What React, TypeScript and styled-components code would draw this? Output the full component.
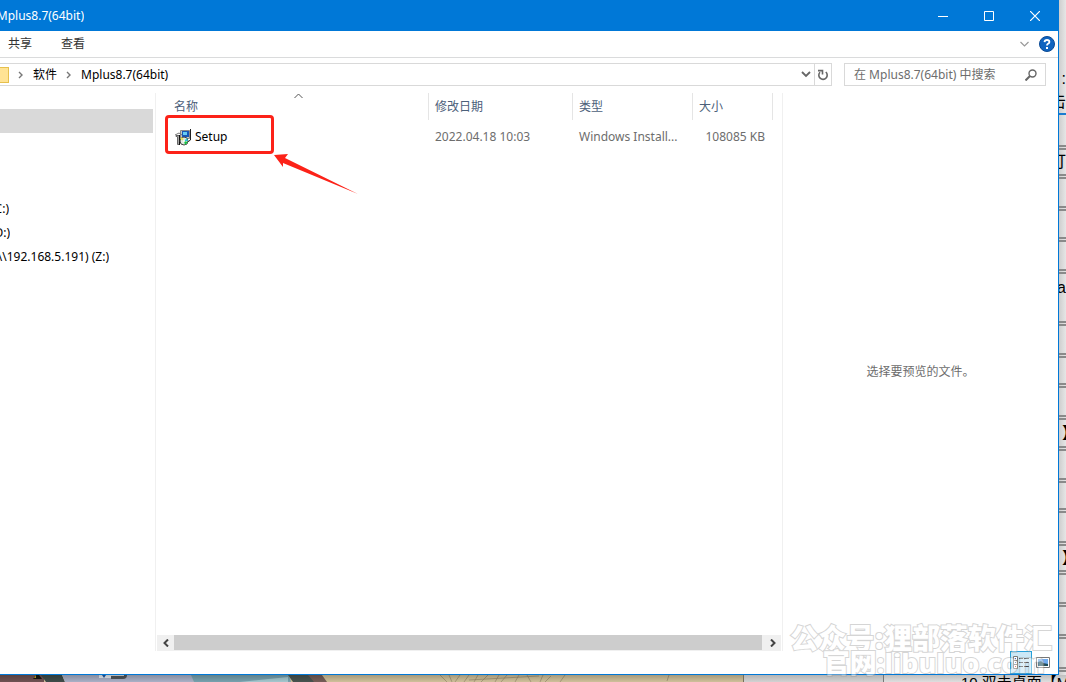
import React from "react";
import styled, { createGlobalStyle } from "styled-components";

const GlobalStyle = createGlobalStyle`
  * { box-sizing: border-box; }
  body {
    margin: 0;
    font-family: "Noto Sans", "Noto Sans CJK SC", sans-serif;
    font-size: 12px;
    line-height: 16px;
    color: #000;
  }
  button, input { font: inherit; color: inherit; }
  button { border: 0; padding: 0; background: none; }
`;

const Desktop = styled.div`
  display: grid;
  grid-template-columns: minmax(0, 1fr) 7px;
  grid-template-rows: minmax(0, 1fr) 7px;
  height: 100vh;
  overflow: hidden;
  background: #dedede;
`;

const Window = styled.main`
  position: relative;
  display: flex;
  flex-direction: column;
  min-width: 0;
  background: #fff;
  border-right: 1px solid #0078d7;
  border-bottom: 1px solid #0078d7;
`;

const TitleBar = styled.header`
  display: flex;
  justify-content: space-between;
  height: 31px;
  flex: none;
  background: #0078d7;
  color: #fff;
`;

const Title = styled.h1`
  display: flex;
  align-items: center;
  justify-content: flex-end;
  width: 84px;
  margin: 0;
  overflow: hidden;
  font-size: 12px;
  font-weight: 400;
`;

const CaptionButtons = styled.div`
  display: flex;
`;

const CaptionButton = styled.button`
  display: grid;
  place-items: center;
  width: 46px;
`;

const Ribbon = styled.nav`
  display: flex;
  align-items: center;
  height: 27px;
  flex: none;
  padding: 0 3px 0 8px;
  border-bottom: 1px solid #dadbdc;
`;

const RibbonTab = styled.button`
  margin-right: 29px;
  color: #333;
`;

const RibbonTools = styled.div`
  display: flex;
  align-items: center;
  gap: 10px;
  margin-left: auto;
`;

const IconButton = styled.button`
  display: grid;
  place-items: center;
`;

const AddressRow = styled.div`
  display: flex;
  gap: 12px;
  flex: none;
  padding: 5px 12px 7px 0;
`;

const AddressBar = styled.div`
  display: flex;
  flex: 1;
  height: 23px;
  border: 1px solid #d9d9d9;
  border-left: 0;
`;

const Crumbs = styled.div`
  display: flex;
  align-items: center;
  flex: 1;
`;

const FolderTile = styled.span`
  width: 9px;
  height: 16px;
  background: #ffe394;
  border: 1px solid #e6c04d;
  border-left: 0;
`;

const Crumb = styled.button`
  white-space: nowrap;
`;

const CrumbArrow = styled.svg`
  margin: 0 10px 0 9px;
`;

const HistoryButton = styled(IconButton)`
  width: 17px;
`;

const RefreshButton = styled(IconButton)`
  width: 17px;
  border-left: 1px solid #d9d9d9;
`;

const SearchBox = styled.label`
  display: flex;
  align-items: center;
  width: 202px;
  height: 23px;
  padding: 0 8px 0 9px;
  border: 1px solid #d9d9d9;
`;

const SearchInput = styled.input`
  flex: 1;
  min-width: 0;
  padding: 0;
  border: 0;
  outline: 0;
  background: none;
  &::placeholder { color: #6d6d6d; opacity: 1; }
`;

const Body = styled.div`
  display: flex;
  flex: 1;
  min-height: 0;
`;

const NavPane = styled.nav`
  display: flex;
  flex-direction: column;
  gap: 64px;
  width: 156px;
  flex: none;
  padding: 16px 2px 0 0;
  border-right: 1px solid #f0f0f0;
`;

const NavItem = styled.button<{ $end?: number; $selected?: boolean }>`
  display: flex;
  align-items: center;
  justify-content: flex-end;
  width: ${(p) => (p.$end ? p.$end + "px" : "100%")};
  height: 24px;
  overflow: hidden;
  white-space: nowrap;
  background: ${(p) => (p.$selected ? "#d9d9d9" : "transparent")};
`;

const ListPane = styled.section`
  position: relative;
  display: flex;
  flex: 1;
  flex-direction: column;
  min-width: 0;
  padding: 0 1px;
  border-right: 1px solid #f0f0f0;
`;

const FileTable = styled.table`
  width: calc(100% - 19px);
  margin-left: 11px;
  table-layout: fixed;
  border-collapse: separate;
  border-spacing: 0;
`;

const HeadCell = styled.th<{ $width?: number }>`
  position: relative;
  width: ${(p) => (p.$width ? p.$width + "px" : "auto")};
  height: 27px;
  padding: 0 6px;
  border-right: 1px solid #e5e5e5;
  color: #4c607a;
  font-weight: 400;
  text-align: left;
`;

const SortMark = styled.svg`
  position: absolute;
  top: 0;
  left: 50%;
  margin-left: -4px;
`;

const Cell = styled.td<{ $align?: string; $color?: string }>`
  height: 34px;
  padding: 0 8px 0 6px;
  overflow: hidden;
  color: ${(p) => p.$color || "#6d6d6d"};
  text-align: ${(p) => p.$align || "left"};
  text-overflow: ellipsis;
  white-space: nowrap;
`;

const FileName = styled.span`
  display: flex;
  align-items: center;
  gap: 4px;
  padding-left: 1px;
`;

const Highlight = styled.div`
  position: absolute;
  top: 22px;
  left: 9px;
  width: 109px;
  height: 39px;
  border: 3px solid #fc2218;
  border-radius: 4px;
`;

const Arrow = styled.svg`
  position: absolute;
  top: 60px;
  left: 117px;
`;

const ScrollBar = styled.div`
  display: flex;
  height: 16px;
  margin-top: auto;
  background: #f0f0f0;
`;

const ScrollButton = styled(IconButton)`
  width: 17px;
`;

const ScrollThumb = styled.div`
  flex: 1;
  height: 15px;
  margin-right: 2px;
  background: #cdcdcd;
`;

const Preview = styled.aside`
  display: grid;
  place-items: center;
  width: 275px;
  flex: none;
  color: #6d6d6d;
`;

const StatusBar = styled.footer`
  display: flex;
  justify-content: flex-end;
  height: 23px;
  flex: none;
  padding-right: 4px;
`;

const ViewButton = styled(IconButton)<{ $active?: boolean }>`
  width: 22px;
  height: 23px;
  border: 1px solid ${(p) => (p.$active ? "#26a0da" : "transparent")};
  background: ${(p) => (p.$active ? "#cbe8f6" : "transparent")};
`;

const Watermark = styled.div`
  position: absolute;
  right: 6px;
  bottom: 0;
  font-family: "Noto Sans CJK SC", sans-serif;
  font-size: 28px;
  font-weight: 900;
  line-height: 27px;
  color: #fff;
  text-align: right;
  white-space: nowrap;
  pointer-events: none;
  opacity: 0.4;
  paint-order: stroke fill;
  -webkit-text-stroke: 2px #999;
`;

const WatermarkSite = styled.div`
  padding-right: 7px;
  font-family: "Noto Sans", "Noto Sans CJK SC", sans-serif;
  font-size: 27px;
  font-weight: 800;
  line-height: 23px;
`;

const SideDocument = styled.div`
  height: 100%;
  overflow: hidden;
  background: linear-gradient(90deg, #cecece, #e6e6e6);
`;

const SideRow = styled.div<{ $height: number; $kind?: string; $mark?: boolean }>`
  display: flex;
  align-items: center;
  justify-content: ${(p) => (p.$mark ? "flex-start" : "flex-end")};
  height: ${(p) => p.$height}px;
  padding-left: ${(p) => (p.$mark ? 3 : 0)}px;
  overflow: hidden;
  font-family: "Liberation Sans", "Noto Sans CJK SC", sans-serif;
  font-size: 16px;
  font-weight: ${(p) => (p.$mark ? 700 : 400)};
  border-bottom: ${(p) =>
    p.$kind === "blue" ? "2px solid #1c7cd0" : p.$kind === "plain" ? "0" : "5px double #8a8a8a"};
`;

const Strip = styled.div`
  display: flex;
  grid-column: 1 / -1;
  overflow: hidden;
`;

const Wallpaper = styled.svg`
  width: 743px;
  flex: none;
`;

const StripPage = styled.div`
  width: 141px;
  flex: none;
  background: linear-gradient(#b4b4b4, #d2d2d2);
  border-left: 1px solid #77705c;
  border-right: 1px solid #777;
`;

const StripText = styled.div`
  flex: 1;
  padding-left: 77px;
  overflow: hidden;
  background: linear-gradient(#bfbfbf, #dedede);
  font-family: "Liberation Sans", "Noto Sans CJK SC", sans-serif;
  font-size: 15px;
  line-height: 16px;
  white-space: nowrap;
`;

const sideRows: { height: number; kind?: string; text?: string; mark?: boolean }[] = [
  { height: 68, kind: "plain" },
  { height: 22, kind: "plain", text: ":" },
  { height: 25, kind: "blue", text: "击" },
  { height: 35 },
  { height: 29, text: "打" },
  { height: 32 },
  { height: 31 },
  { height: 32 },
  { height: 28, kind: "plain", text: "a" },
  { height: 24 },
  { height: 32 },
  { height: 30 },
  { height: 32 },
  { height: 31, text: "】", mark: true },
  { height: 32 },
  { height: 30 },
  { height: 33 },
  { height: 29, text: "】", mark: true },
  { height: 32 },
  { height: 32 },
  { height: 33 },
];

function ChevronRight() {
  return (
    <CrumbArrow width="5" height="8" viewBox="0 0 5 8" fill="none" stroke="#777" strokeWidth="1.4">
      <path d="M1 1l3 3-3 3" />
    </CrumbArrow>
  );
}

function InstallerIcon() {
  return (
    <svg width="16" height="17" viewBox="0 0 16 17">
      <path d="M5.500 1.500h9v8h-9z" fill="#c4c8c8" stroke="#888" />
      <path d="M7 2h7v6H7z" fill="#1657b8" />
      <path d="M8 3h4v3H8z" fill="#67cdf4" />
      <path d="M15.500 0v11l-3 2" fill="none" stroke="#222" />
      <path d="M1 6.500h3v9H2.500v-8H1z" fill="#e3e3e3" stroke="#666" />
      <path d="M0 6l4-2 3 2" fill="none" stroke="#777" />
      <path d="M4.500 6v10" stroke="#111" />
      <circle cx="9" cy="12" r="4" fill="#dfe8df" stroke="#444" />
      <path d="M9 12L5 10l2-2z" fill="#eae34a" />
      <path d="M9 12l4 1-3 3z" fill="#18c445" />
      <path d="M9 12l3-3 1 3z" fill="#27c8dd" />
      <circle cx="9" cy="12" r="1" fill="#fff" />
    </svg>
  );
}

function WallpaperStrip() {
  return (
    <Wallpaper height="7" viewBox="0 0 743 7" preserveAspectRatio="none">
      <defs>
        <linearGradient id="shade" x1="0" x2="0" y1="0" y2="1">
          <stop offset="0" stopColor="#000" stopOpacity=".2" />
          <stop offset="1" stopColor="#000" stopOpacity="0" />
        </linearGradient>
      </defs>
      <path d="M0 0h743v7H0z" fill="#cfc09a" />
      <path d="M0 0h44v7H0z" fill="#6f5152" />
      <path d="M41 0h21l3 7H46z" fill="#3e4b49" />
      <path d="M62 0h130l2 7H65z" fill="#a9b0c6" />
      <path d="M191 0h98l2 7h-97z" fill="#77a1ae" />
      <path d="M240 7l48-5v5z" fill="#a4c7ce" />
      <path d="M288 0h22l6 7h-23z" fill="#48534f" />
      <path d="M308 0h14l5 7h-13z" fill="#755d57" />
      <path d="M33 4l3-4h3l3 4z" fill="#161510" />
      <path d="M34 3l2-3v3z" fill="#b8a52b" />
      <path d="M99 0h12v3H99z" fill="#e6ebf1" />
      <path d="M102 0h4l-2 3z" fill="#205ba8" />
      <path d="M111 0h16q0 4-4 4h-12z" fill="#50555a" />
      <path d="M111 0h13v1h-13z" fill="#dadde2" />
      <path
        d="M440 0l7 7m2-7l3 7m8-7l-5 7m14-7l-5 7m14-7l-4 7m14-7l-7 7m18-7l-4 7m12-7l-6 7m18-7l-4 7m12-7l4 7m12-7l-3 7m11-6l-6 6m20-7l-5 7m-91-2l70-4m130-1l-2 6"
        fill="none"
        stroke="#8d8065"
        strokeOpacity=".6"
      />
      <path d="M0 0h743v7H0z" fill="url(#shade)" />
    </Wallpaper>
  );
}

export default function App() {
  return (
    <>
      <GlobalStyle />
      <Desktop>
        <Window>
          <TitleBar>
            <Title>Mplus8.7(64bit)</Title>
            <CaptionButtons>
              <CaptionButton aria-label="最小化">
                <svg width="10" height="10" stroke="#fff">
                  <path d="M0 5.5h10" />
                </svg>
              </CaptionButton>
              <CaptionButton aria-label="最大化">
                <svg width="10" height="10" fill="none" stroke="#fff">
                  <path d="M.5.5h9v9h-9z" />
                </svg>
              </CaptionButton>
              <CaptionButton aria-label="关闭">
                <svg width="10" height="10" stroke="#fff" strokeWidth="1.200">
                  <path d="M0 0l10 10M10 0L0 10" />
                </svg>
              </CaptionButton>
            </CaptionButtons>
          </TitleBar>

          <Ribbon>
            <RibbonTab>共享</RibbonTab>
            <RibbonTab>查看</RibbonTab>
            <RibbonTools>
              <IconButton aria-label="展开功能区">
                <svg width="9" height="6" fill="none" stroke="#999" strokeWidth="1.2">
                  <path d="M.5 1l4 4 4-4" />
                </svg>
              </IconButton>
              <IconButton aria-label="帮助">
                <svg width="16" height="16" viewBox="0 0 16 16">
                  <circle cx="8" cy="8" r="7.5" fill="#0f64c0" stroke="#0b4a94" />
                  <path d="M5.5 6.2Q5.7 4 8 4t2.4 2Q10.400 7 9 7.800 8 8.400 8 9.600" fill="none" stroke="#fff" strokeWidth="1.800" />
                  <path d="M7 11h2v2H7z" fill="#fff" />
                </svg>
              </IconButton>
            </RibbonTools>
          </Ribbon>

          <AddressRow>
            <AddressBar>
              <Crumbs>
                <FolderTile />
                <ChevronRight />
                <Crumb>软件</Crumb>
                <ChevronRight />
                <Crumb>Mplus8.7(64bit)</Crumb>
              </Crumbs>
              <HistoryButton aria-label="历史记录">
                <svg width="10" height="7" fill="none" stroke="#666" strokeWidth="1.800">
                  <path d="M1 1l4 4 4-4" />
                </svg>
              </HistoryButton>
              <RefreshButton aria-label="刷新">
                <svg width="12" height="12" viewBox="0 0 12 12" fill="none" stroke="#666" strokeWidth="1.600">
                  <path d="M3 3.200A4.200 4.200 0 1 0 8.800 3" />
                  <path d="M1 1.600h4.500v4" />
                </svg>
              </RefreshButton>
            </AddressBar>
            <SearchBox>
              <SearchInput aria-label="搜索" placeholder="在 Mplus8.7(64bit) 中搜索" />
              <svg width="12" height="12" viewBox="0 0 12 12" fill="none" stroke="#666">
                <circle cx="7.500" cy="4.500" r="3.500" strokeWidth="1.400" />
                <path d="M5 7l-4.500 4.500" strokeWidth="2" />
              </svg>
            </SearchBox>
          </AddressRow>

          <Body>
            <NavPane>
              <NavItem $selected aria-label="此电脑" />
              <div>
                <NavItem $end={9}>C:)</NavItem>
                <NavItem $end={10}>D:)</NavItem>
                <NavItem $end={109}>\\192.168.5.191) (Z:)</NavItem>
              </div>
            </NavPane>
            <ListPane>
              <FileTable>
                <thead>
                  <tr>
                    <HeadCell>
                      名称
                      <SortMark width="9" height="6" fill="none" stroke="#555">
                        <path d="M.5 5l4-4 4 4" />
                      </SortMark>
                    </HeadCell>
                    <HeadCell $width={144}>修改日期</HeadCell>
                    <HeadCell $width={120}>类型</HeadCell>
                    <HeadCell $width={80}>大小</HeadCell>
                  </tr>
                </thead>
                <tbody>
                  <tr>
                    <Cell $color="#000">
                      <FileName>
                        <InstallerIcon />
                        Setup
                      </FileName>
                    </Cell>
                    <Cell>2022.04.18 10:03</Cell>
                    <Cell>Windows Install...</Cell>
                    <Cell $align="right">108085 KB</Cell>
                  </tr>
                </tbody>
              </FileTable>
              <Highlight />
              <Arrow width="88" height="44" viewBox="0 0 88 44">
                <path d="M1 2l14-1-3 4 73 36L10 10v4z" fill="#fc2218" />
              </Arrow>
              <ScrollBar>
                <ScrollButton aria-label="向左滚动">
                  <svg width="6" height="8" fill="none" stroke="#444" strokeWidth="2">
                    <path d="M5 .5L1.500 4 5 7.500" />
                  </svg>
                </ScrollButton>
                <ScrollThumb />
                <ScrollButton aria-label="向右滚动">
                  <svg width="6" height="8" fill="none" stroke="#444" strokeWidth="2">
                    <path d="M1 .5L4.500 4 1 7.500" />
                  </svg>
                </ScrollButton>
              </ScrollBar>
            </ListPane>
            <Preview>选择要预览的文件。</Preview>
          </Body>

          <StatusBar>
            <ViewButton $active aria-label="详细信息">
              <svg width="16" height="14" viewBox="0 0 16 14">
                <path d="M.5.5h4v12h-4zM.5 4.500h4M.5 8.500h4" fill="#fff" stroke="#777" />
                <path d="M2 2h1v1H2zM2 6h1v1H2z" fill="#2866c8" />
                <path d="M2 10h1v1H2z" fill="#d22" />
                <path d="M6 2.500h4m1 0h5M6 6.500h4m1 0h5M6 10.500h4m1 0h5" stroke="#444" />
              </svg>
            </ViewButton>
            <ViewButton aria-label="大图标">
              <svg width="14" height="11" viewBox="0 0 14 11">
                <path d="M.5.5h13v10H.5z" fill="#fff" stroke="#777" />
                <path d="M2 2h10v7H2z" fill="#6fabee" />
                <path d="M2 5q4-2 5 1l5 1v2H2z" fill="#1d4c5c" />
              </svg>
            </ViewButton>
          </StatusBar>

          <Watermark>
            <div>公众号:狸部落软件汇</div>
            <WatermarkSite>官网:libuluo.com</WatermarkSite>
          </Watermark>
        </Window>

        <SideDocument>
          {sideRows.map((row, i) => (
            <SideRow key={i} $height={row.height} $kind={row.kind} $mark={row.mark}>
              {row.text}
            </SideRow>
          ))}
        </SideDocument>

        <Strip>
          <WallpaperStrip />
          <StripPage />
          <StripText>10.双击桌面【M</StripText>
        </Strip>
      </Desktop>
    </>
  );
}
